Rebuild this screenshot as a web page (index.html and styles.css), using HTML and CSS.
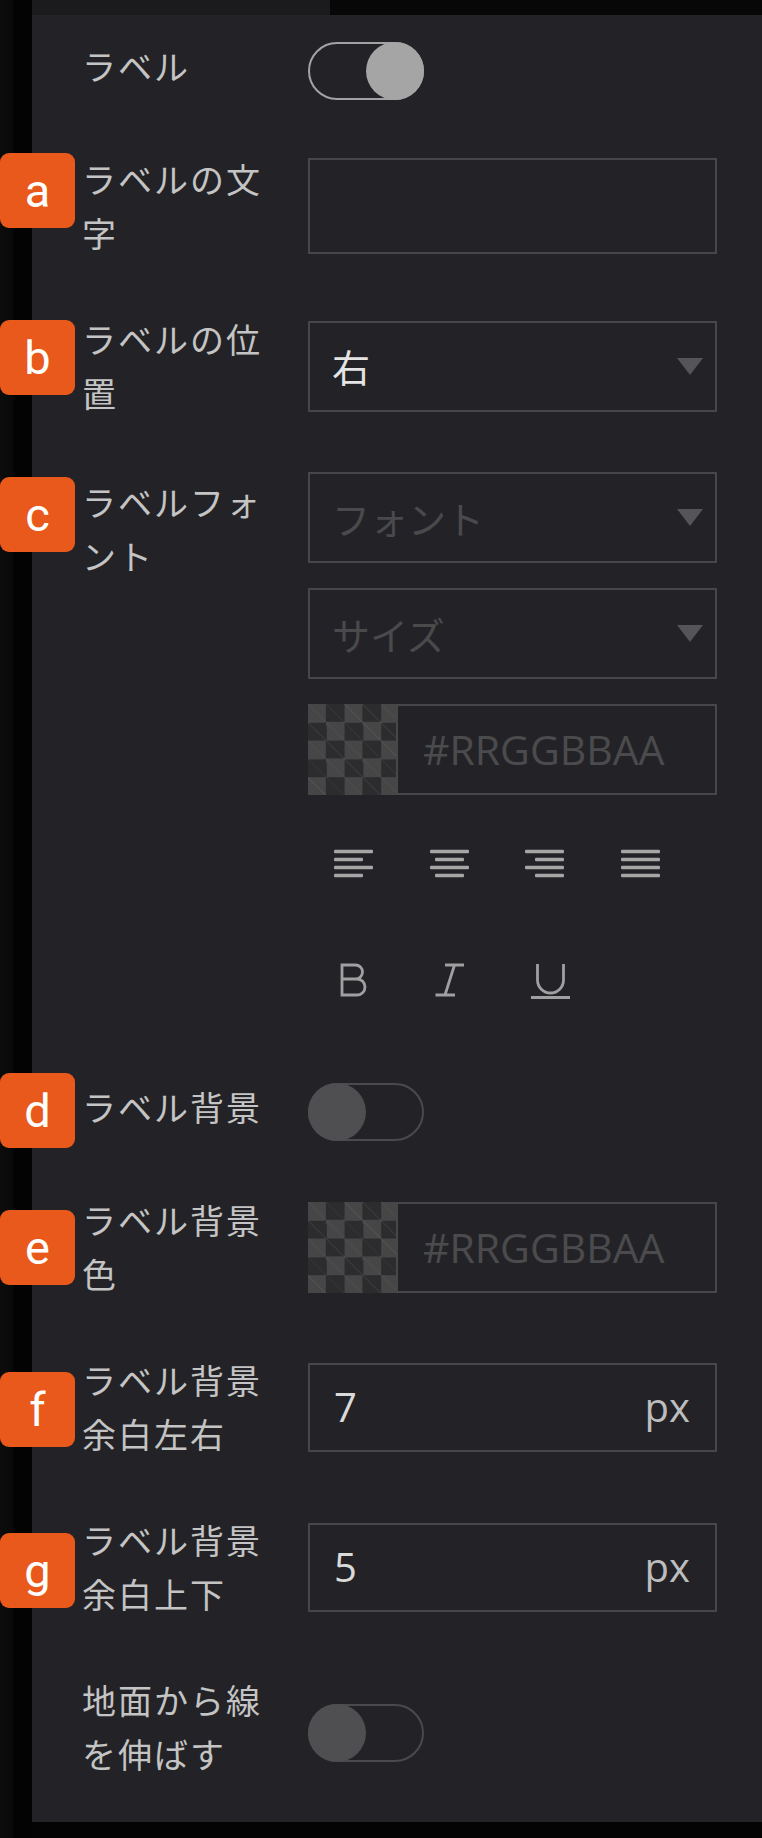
FILE: index.html
```html
<!DOCTYPE html>
<html lang="ja">
<head>
<meta charset="utf-8">
<title>ラベル設定</title>
<link rel="stylesheet" href="styles.css">
</head>
<body>
<div class="page">
  <div class="strip"></div>
  <div class="main">
    <div class="topbar"><div class="tab"></div></div>
    <div class="panel">

      <div class="row">
        <div class="label">ラベル</div>
        <div class="toggle on"><span class="knob"></span></div>
      </div>

      <div class="row">
        <div class="label">ラベルの文字</div>
        <div class="textbox"></div>
      </div>

      <div class="row">
        <div class="label">ラベルの位置</div>
        <div class="select"><span class="value">右</span><span class="arrow"></span></div>
      </div>

      <div class="row row-top">
        <div class="label label-top">ラベルフォント</div>
        <div class="stack">
          <div class="select"><span class="placeholder">フォント</span><span class="arrow"></span></div>
          <div class="select"><span class="placeholder">サイズ</span><span class="arrow"></span></div>
          <div class="color"><span class="swatch"></span><span class="field">#RRGGBBAA</span></div>
          <div class="tools tools-align">
            <svg class="ic-align" viewBox="0 0 39 29" width="39" height="29"><rect x="0" y="0.8" width="39" height="3.4" rx="1"/><rect x="0" y="8.8" width="29" height="3.4" rx="1"/><rect x="0" y="16.8" width="39" height="3.4" rx="1"/><rect x="0" y="24.8" width="29" height="3.4" rx="1"/></svg>
            <svg class="ic-align" viewBox="0 0 39 29" width="39" height="29"><rect x="0" y="0.8" width="39" height="3.4" rx="1"/><rect x="5" y="8.8" width="29" height="3.4" rx="1"/><rect x="0" y="16.8" width="39" height="3.4" rx="1"/><rect x="5" y="24.8" width="29" height="3.4" rx="1"/></svg>
            <svg class="ic-align" viewBox="0 0 39 29" width="39" height="29"><rect x="0" y="0.8" width="39" height="3.4" rx="1"/><rect x="10" y="8.8" width="29" height="3.4" rx="1"/><rect x="0" y="16.8" width="39" height="3.4" rx="1"/><rect x="10" y="24.8" width="29" height="3.4" rx="1"/></svg>
            <svg class="ic-align" viewBox="0 0 39 29" width="39" height="29"><rect x="0" y="0.8" width="39" height="3.4" rx="1"/><rect x="0" y="8.8" width="39" height="3.4" rx="1"/><rect x="0" y="16.8" width="39" height="3.4" rx="1"/><rect x="0" y="24.8" width="39" height="3.4" rx="1"/></svg>
          </div>
          <div class="tools tools-style">
            <svg class="ic-style" viewBox="0 0 30 38" width="30" height="38"><path d="M3 3H16.5A7 7 0 0 1 16.5 17H3ZM3 17H18A8 8 0 0 1 18 33H3Z"/></svg>
            <svg class="ic-style" viewBox="0 0 30 38" width="30" height="38"><path d="M10 3H29M19.5 3L10 33M0.5 33H20"/></svg>
            <svg class="ic-style" viewBox="0 0 40 38" width="40" height="38"><path d="M6.5 2V18A13 13 0 0 0 32.5 18V2M0 35.5H39"/></svg>
          </div>
        </div>
      </div>

      <div class="row">
        <div class="label">ラベル背景</div>
        <div class="toggle off"><span class="knob"></span></div>
      </div>

      <div class="row">
        <div class="label">ラベル背景色</div>
        <div class="color"><span class="swatch"></span><span class="field">#RRGGBBAA</span></div>
      </div>

      <div class="row">
        <div class="label">ラベル背景余白左右</div>
        <div class="num"><span class="num-value">7</span><span class="unit">px</span></div>
      </div>

      <div class="row">
        <div class="label">ラベル背景余白上下</div>
        <div class="num"><span class="num-value">5</span><span class="unit">px</span></div>
      </div>

      <div class="row">
        <div class="label">地面から線を伸ばす</div>
        <div class="toggle off"><span class="knob"></span></div>
      </div>

    </div>
  </div>

  <div class="badges">
    <span class="badge b-a">a</span>
    <span class="badge b-b">b</span>
    <span class="badge b-c">c</span>
    <span class="badge b-d">d</span>
    <span class="badge b-e">e</span>
    <span class="badge b-f">f</span>
    <span class="badge b-g">g</span>
  </div>
</div>
</body>
</html>
```
FILE: styles.css
```css
html, body {
  margin: 0;
  padding: 0;
  background: #040404;
}

.page {
  position: relative;
  width: 762px;
  height: 1838px;
  display: flex;
  background: #040404;
  overflow: hidden;
}

.strip {
  width: 32px;
  flex: none;
  background: linear-gradient(to right, #0c0c0c 0, #0a0a0a 12px, #030303 14px, #030303 100%);
}

.main {
  width: 730px;
  display: flex;
  flex-direction: column;
}

.topbar {
  height: 15px;
  background: #070707;
  display: flex;
}

.tab {
  width: 298px;
  background: #1b1b1e;
}

.panel {
  background: #232327;
  display: flex;
  flex-direction: column;
  gap: 52px;
  padding: 16px 0 41px 50px;
}

.row {
  display: grid;
  grid-template-columns: 200px 409px;
  column-gap: 26px;
  align-items: center;
}

.row-top {
  align-items: start;
}

.label {
  font-family: "Noto Sans CJK JP", "Noto Sans", sans-serif;
  font-size: 34px;
  letter-spacing: 2px;
  line-height: 54px;
  color: #c4c4c4;
}

.label-top {
  margin-top: 3px;
}

/* toggle */
.toggle {
  box-sizing: border-box;
  width: 116px;
  height: 58px;
  border: 2px solid;
  border-radius: 29px;
  display: flex;
  align-items: center;
  margin-top: 11px;
}

.knob {
  flex: none;
  width: 58px;
  height: 58px;
  margin: -2px;
  border-radius: 50%;
}

.toggle.on {
  border-color: #a3a3a3;
}

.toggle.on .knob {
  background: #a5a5a5;
  margin-left: auto;
}

.toggle.off {
  border-color: #4a4a4c;
}

.toggle.off .knob {
  background: #4f4f51;
}

/* inputs */
.textbox {
  box-sizing: border-box;
  height: 96px;
  border: 2px solid #474749;
}

.select {
  box-sizing: border-box;
  height: 91px;
  border: 2px solid #474749;
  display: flex;
  align-items: center;
  justify-content: space-between;
  padding: 0 12px 0 22px;
  font-family: "Noto Sans CJK JP", "Noto Sans", sans-serif;
  font-size: 38px;
  line-height: 1;
}

.value {
  color: #e4e4e4;
}

.placeholder {
  color: #4a4a4c;
}

.arrow {
  width: 0;
  height: 0;
  border-left: 13px solid transparent;
  border-right: 13px solid transparent;
  border-top: 17px solid #555557;
}

.stack {
  display: flex;
  flex-direction: column;
}

.stack > .select + .select,
.stack > .select + .color {
  margin-top: 25px;
}

.color {
  display: flex;
  height: 91px;
}

.swatch {
  flex: none;
  width: 88px;
  background-color: #2c2c2f;
  background-image:
    repeating-linear-gradient(45deg, rgba(0, 0, 0, 0) 0 11.9px, rgba(255, 255, 255, 0.05) 11.9px 12.94px),
    conic-gradient(rgba(0, 0, 0, 0) 25%, #464647 0 50%, rgba(0, 0, 0, 0) 0 75%, #464647 0);
  background-size: auto, 36.6px 36.6px;
}

.field {
  flex: 1;
  box-sizing: border-box;
  border: 2px solid #474749;
  display: flex;
  align-items: center;
  padding-left: 25px;
  font-family: "Open Sans", "Liberation Sans", sans-serif;
  font-size: 41px;
  line-height: 1;
  color: #4b4b4d;
}

.num {
  box-sizing: border-box;
  height: 89px;
  border: 2px solid #474749;
  display: flex;
  align-items: center;
  justify-content: space-between;
  padding: 0 25px 0 24px;
  font-family: "Open Sans", "Liberation Sans", sans-serif;
  font-size: 40px;
  line-height: 1;
}

.num-value {
  color: #dadada;
}

.unit {
  color: #bdbdbd;
}

/* toolbar */
.tools {
  height: 78px;
  display: flex;
  align-items: center;
}

.tools-align {
  margin-top: 29px;
  padding-left: 26px;
  gap: 56.5px;
}

.tools-style {
  margin-top: 40px;
  padding-left: 31px;
  gap: 66px;
}

.ic-align {
  display: block;
  fill: #a6a6a6;
}

.ic-style {
  display: block;
  fill: none;
  stroke: #a0a0a0;
  stroke-width: 2.8;
}

/* annotation badges */
.badges {
  position: absolute;
  left: 0;
  top: 0;
}

.badge {
  position: absolute;
  left: 0;
  width: 75px;
  height: 75px;
  border-radius: 9px;
  background: #e9591b;
  color: #ffffff;
  font-family: Roboto, "Liberation Sans", sans-serif;
  font-size: 47px;
  line-height: 1;
  display: flex;
  align-items: center;
  justify-content: center;
}

.b-a { top: 153px; }
.b-b { top: 320px; }
.b-c { top: 477px; }
.b-d { top: 1073px; }
.b-e { top: 1210px; }
.b-f { top: 1372px; }
.b-g { top: 1533px; }
```
